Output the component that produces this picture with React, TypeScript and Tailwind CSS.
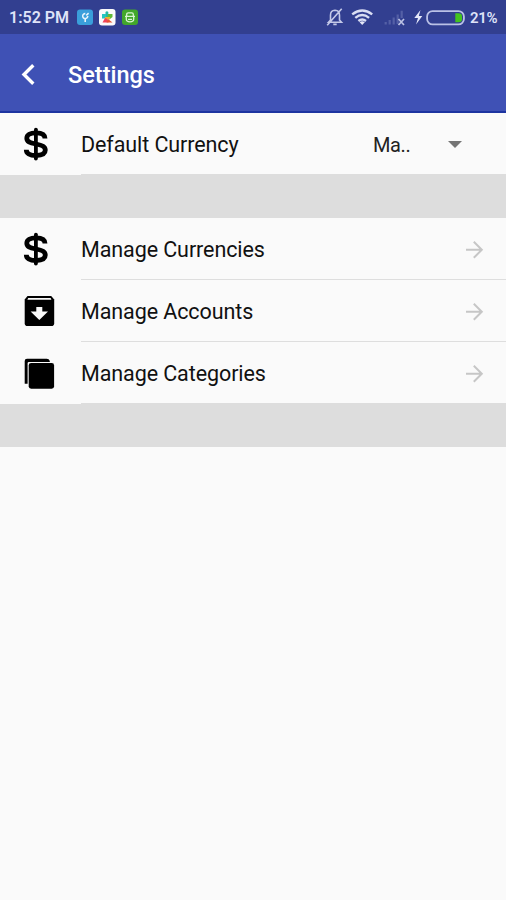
import type { ReactNode } from "react";

function DollarIcon() {
  return (
    <svg className="h-9 w-9" viewBox="0 0 36 36" fill="none" stroke="#000" strokeLinecap="round">
      <path d="M15.9 3.6V32.6" strokeWidth="3.8" />
      <path
        d="M25 12.6C25 8.8 22 6.9 16 6.9C10 6.9 6.8 8.8 6.8 12.2C6.8 15.6 9.5 16.8 16 18C22.5 19.2 25.3 20.6 25.3 24.1C25.3 27.5 22 29.5 16 29.5C9.5 29.5 6.3 27.4 6.3 23.7"
        strokeWidth="4.8"
        strokeLinecap="butt"
      />
    </svg>
  );
}

function ArchiveIcon() {
  return (
    <svg className="h-9 w-9" viewBox="0 0 36 36">
      <path d="M7.5 3H31.2L34.2 6.5V30.2Q34.2 33 31.4 33H7.5Q4.7 33 4.7 30.2V6.5Z" fill="#000" />
      <path d="M8.2 4.9H30.6L31.4 6.7H7.4Z" fill="#fafafa" />
      <path d="M16.3 14H22.3V18.5H28L19.3 27L10.6 18.5H16.3Z" fill="#fafafa" />
    </svg>
  );
}

function CategoriesIcon() {
  return (
    <svg className="h-9 w-9" viewBox="0 0 36 36" fill="#000">
      <path d="M26.7 3.8H7Q4.7 3.8 4.7 6.1V28.7H7.6V8.2Q7.6 6.9 8.9 6.9H29.8V6Q29 3.8 26.7 3.8Z" />
      <rect x="8.7" y="8.1" width="25.4" height="25.6" rx="2.4" />
    </svg>
  );
}

function ArrowIcon() {
  return (
    <svg className="h-6 w-6" viewBox="0 0 24 24" fill="none" stroke="#c6c6c6" strokeWidth="2">
      <path d="M4 12.8H19.5M11.8 4.8L19.8 12.8L11.8 20.8" />
    </svg>
  );
}

function StatusBar() {
  return (
    <div className="flex h-[34px] items-center bg-[#323f90] pl-[9px] pr-2 text-[#dfe3f8]">
      <span className="w-[68px] whitespace-nowrap pt-[2px] text-[16px] font-semibold leading-[34px]">1:52 PM</span>
      <svg className="h-[18px] w-[62px]" viewBox="0 0 62 18">
        <rect x="0" y="1.5" width="16" height="15.5" rx="3" fill="#3a9fdb" />
        <path d="M8.3 5.6A2.5 2.5 0 1 0 10.7 8M8.2 10.5V14M9.3 7.3L11.6 5.2" fill="none" stroke="#e6f4fc" strokeWidth="1.6" />
        <rect x="22" y="1" width="16.5" height="16.5" rx="3" fill="#fafafa" />
        <path d="M25 6H28.5V4Q30 2.5 31.3 4V6H34V9H25Z" fill="#22b8a5" />
        <path d="M25 6H29V10.5H25Z" fill="#25c4c0" />
        <path d="M31 6H35.5V9L33 11H30Z" fill="#60b938" />
        <path d="M28 9H33V11.5H28Z" fill="#e3b72e" />
        <path d="M25.5 14.5L28 10L30.5 11L31.5 14.5Z" fill="#f04459" />
        <path d="M31 11L35.5 14.5H29.5Z" fill="#e65431" />
        <rect x="45" y="1.5" width="16" height="15.5" rx="3" fill="#42a72b" />
        <path d="M49.7 8V6.3Q49.7 4.8 51.2 4.8H54.8Q56.3 4.8 56.3 6.3V8M48 8.3H58M49.3 9V11.3Q49.3 13.8 53 13.8T56.7 11.3V9M51 11.3H55" fill="none" stroke="#d9f5d3" strokeWidth="1.3" />
      </svg>
      <svg className="ml-auto h-[22px] w-[142px] shrink-0" viewBox="0 0 142 22" fill="none">
        <g stroke="#c4c9e8" strokeWidth="1.6">
          <path d="M2.5 16.2L4.5 14V9.2Q4.5 4.5 9 4.3Q13.5 4.5 13.5 9.2V14L15.5 16.2ZM7.3 18.4H10.7M1.2 19.2L15.7 2.7" />
        </g>
        <g stroke="#d9ddf3" strokeWidth="2.4">
          <path d="M26.2 8.4Q36.2 .6 46.2 8.4M29.3 11.9Q36.2 6.3 43.1 11.9M32.4 15Q36.2 12 40 15" />
        </g>
        <path d="M36.2 19L33.6 16.2Q36.2 14.3 38.8 16.2Z" fill="#e4e7f7" />
        <path d="M59.7 18.5V16M63.7 18.5V14M67.7 18.5V11.5M71.7 18V8.6M75.7 12V4.8" stroke="#5460a6" strokeWidth="2.2" />
        <path d="M72.5 13L78 19M78 13L72.5 19" stroke="#bcc2e4" strokeWidth="1.7" />
        <path d="M94.5 4L88.3 12H92L90 18.5L96.3 10H92.8Z" fill="#e5e8f9" />
        <rect x="101.1" y="5.1" width="36.8" height="13.3" rx="5.5" stroke="#bac1e6" strokeWidth="1.8" />
        <path d="M129.3 7.2H132.5Q136 7.2 136 10.2V13.2Q136 16.2 132.5 16.2H129.3Z" fill="#43c51f" />
      </svg>
      <span className="ml-[2px] w-7 whitespace-nowrap pt-[2px] text-[15px] font-semibold leading-[34px] tracking-[-0.3px]">21%</span>
    </div>
  );
}

function Row({ icon, label, last, children }: { icon: ReactNode; label: string; last?: boolean; children: ReactNode }) {
  return (
    <div className="flex h-[62px] items-center pl-5">
      <div className="w-[61px] shrink-0">{icon}</div>
      <div className={`flex h-full min-w-0 flex-1 items-center border-b ${last ? "border-[#dddddd]" : "border-[#dedede]"}`}>
        <span className="whitespace-nowrap pt-[2px] text-[21.5px] leading-[28px] tracking-[-0.09px] text-[#111]">{label}</span>
        {children}
      </div>
    </div>
  );
}

export default function App() {
  return (
    <main className="flex h-[900px] w-[506px] flex-col overflow-hidden bg-[#fafafa] font-['Roboto',sans-serif]">
      <StatusBar />
      <header className="flex h-[79px] items-center border-b-2 border-[#1d34a0] bg-[#3f51b5] pl-5 text-white">
        <svg className="mt-[3px] h-6 w-6" viewBox="0 0 24 24" fill="none" stroke="currentColor" strokeWidth="3.4">
          <path d="M13.3 3.3L4 12.5L13.3 21.7" />
        </svg>
        <h1 className="ml-6 pt-[5px] text-[23.5px] font-medium leading-8">Settings</h1>
      </header>
      <section>
        <Row icon={<DollarIcon />} label="Default Currency" last>
          <span className="ml-auto w-[75px] pt-[2px] text-[20px] tracking-[-0.4px] text-[#222]">Ma..</span>
          <svg className="mr-[44px] mt-[2px] h-[7px] w-[14px]" viewBox="0 0 14 7">
            <path d="M0 0H14L7 7Z" fill="#757575" />
          </svg>
        </Row>
      </section>
      <div className="h-[43px] bg-[#dddddd]" />
      <section>
        <Row icon={<DollarIcon />} label="Manage Currencies">
          <span className="ml-auto mr-5"><ArrowIcon /></span>
        </Row>
        <Row icon={<ArchiveIcon />} label="Manage Accounts">
          <span className="ml-auto mr-5"><ArrowIcon /></span>
        </Row>
        <Row icon={<CategoriesIcon />} label="Manage Categories" last>
          <span className="ml-auto mr-5"><ArrowIcon /></span>
        </Row>
      </section>
      <div className="h-[43px] bg-[#dddddd]" />
    </main>
  );
}
